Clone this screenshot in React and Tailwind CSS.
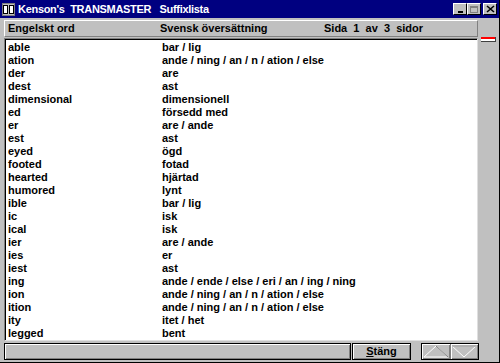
import React from 'react';

const rows = [
  ['able', 'bar / lig'],
  ['ation', 'ande / ning / an / n / ation / else'],
  ['der', 'are'],
  ['dest', 'ast'],
  ['dimensional', 'dimensionell'],
  ['ed', 'försedd med'],
  ['er', 'are / ande'],
  ['est', 'ast'],
  ['eyed', 'ögd'],
  ['footed', 'fotad'],
  ['hearted', 'hjärtad'],
  ['humored', 'lynt'],
  ['ible', 'bar / lig'],
  ['ic', 'isk'],
  ['ical', 'isk'],
  ['ier', 'are / ande'],
  ['ies', 'er'],
  ['iest', 'ast'],
  ['ing', 'ande / ende / else / eri / an / ing / ning'],
  ['ion', 'ande / ning / an / n / ation / else'],
  ['ition', 'ande / ning / an / n / ation / else'],
  ['ity', 'itet / het'],
  ['legged', 'bent'],
];

const font = { fontFamily: '"Liberation Sans", Arial, sans-serif' };

function WinButton({ children }) {
  return (
    <div className="w-[14px] h-[12px] bg-[#c0c0c0] border border-t-white border-l-white border-r-black border-b-black flex items-end justify-center">
      {children}
    </div>
  );
}

export default function App() {
  return (
    <div className="w-[500px] h-[363px] bg-[#c0c0c0] flex flex-col border-r border-b border-r-black border-b-black overflow-hidden text-black" style={font}>
      {/* title bar */}
      <div className="h-[18px] bg-[#000080] flex items-center shrink-0">
        <div className="ml-[2px] w-[13px] h-[13px] bg-[#c0c0c0] flex items-center justify-center gap-[1px] border border-[#808080]">
          <div className="w-[5px] h-[9px] border border-black bg-white" />
          <div className="w-[5px] h-[9px] border border-black bg-white" />
        </div>
        <div className="ml-[3px] text-white font-bold text-[11px] whitespace-pre leading-none tracking-[-0.3px]">
          Kenson's  TRANSMASTER   Suffixlista
        </div>
        <div className="ml-auto mr-[2px] flex items-center">
          <WinButton><div className="w-[5px] h-[2px] bg-black mb-[1px]" /></WinButton>
          <WinButton><div className="w-[8px] h-[7px] border border-[#808080] border-t-2 mb-[1px]" /></WinButton>
          <div className="ml-[2px]">
            <WinButton>
              <svg width="9" height="8" viewBox="0 0 9 8" className="mb-[1px]">
                <path d="M1 1 L8 7 M8 1 L1 7" stroke="black" strokeWidth="1.6" />
              </svg>
            </WinButton>
          </div>
        </div>
      </div>

      {/* body */}
      <div className="flex flex-1 pl-[4px]">
        <div className="w-[474px] flex flex-col">
          <div className="mt-[2px] h-[17px] border border-t-white border-l-white border-r-[#808080] border-b-[#808080] flex items-center text-[11px] font-bold whitespace-pre">
            <div className="w-[155px] pl-[3px]">Engelskt ord</div>
            <div className="w-[164px]">Svensk översättning</div>
            <div>Sida  1  av  3  sidor</div>
          </div>
          <div className="mt-[1px] h-[303px] bg-white border border-t-[#808080] border-l-[#808080] border-r-[#dfdfdf] border-b-[#dfdfdf] shadow-[inset_1px_1px_0_#000] pt-[2px] overflow-hidden">
            {rows.map(([en, sv]) => (
              <div key={en} className="h-[13px] flex items-center text-[11px] font-bold leading-none whitespace-pre">
                <div className="w-[157px] pl-[3px]">{en}</div>
                <div>{sv}</div>
              </div>
            ))}
          </div>
        </div>
        <div className="flex-1 pt-[18px] pl-[3px]">
          <div className="w-[15px] h-[5px] bg-white border-b border-r border-[#404040]">
            <div className="mt-[1px] h-[2px] bg-[#ff0000]" />
          </div>
        </div>
      </div>

      {/* bottom bar */}
      <div className="h-[23px] flex items-start pt-[2px] pl-[4px] shrink-0">
        <div className="w-[347px] h-[17px] border border-black bg-[#c0c0c0] shadow-[inset_1px_1px_0_#fff,inset_-1px_-1px_0_#808080]" />
        <div className="ml-[1px] w-[59px] h-[17px] border border-black bg-[#c0c0c0] shadow-[inset_1px_1px_0_#fff,inset_-1px_-1px_0_#808080] flex items-center justify-center text-[11px] font-bold leading-none">
          <span><span className="underline">S</span>täng</span>
        </div>
        <div className="ml-[10px] w-[58px] h-[17px] border border-black flex">
          <div className="flex-1 shadow-[inset_1px_1px_0_#fff,inset_-1px_-1px_0_#808080] flex items-center justify-center border-r border-[#808080]">
            <svg width="26" height="13" viewBox="0 0 26 13">
              <path d="M1 12 L13 1 L25 12 Z" fill="none" stroke="#ffffff" strokeWidth="1" />
              <path d="M13 1 L25 12" stroke="#808080" strokeWidth="1" />
            </svg>
          </div>
          <div className="flex-1 shadow-[inset_1px_1px_0_#fff,inset_-1px_-1px_0_#808080] flex items-center justify-center">
            <svg width="26" height="13" viewBox="0 0 26 13">
              <path d="M1 1 L25 1 L13 12 Z" fill="none" stroke="#ffffff" strokeWidth="1" />
              <path d="M1 1 L25 1" stroke="#808080" strokeWidth="1" />
            </svg>
          </div>
        </div>
      </div>
    </div>
  );
}
